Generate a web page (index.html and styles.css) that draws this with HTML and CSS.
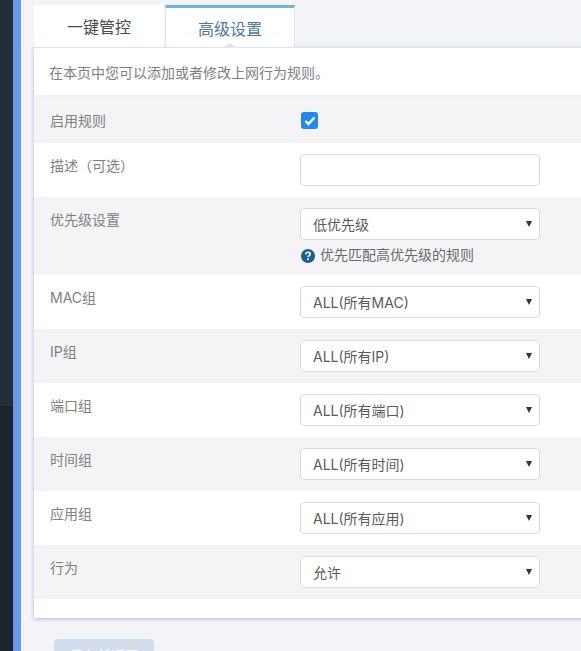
FILE: index.html
```html
<!DOCTYPE html>
<html>
<head>
  <link rel="stylesheet" href="styles.css">
</head>
<body>
  <div class="sidebar">
    <div class="sidebar-top"></div>
    <div class="sidebar-bottom"></div>
  </div>
  <div class="sidebar-edge"></div>

  <div class="content">
    <div class="tabs">
      <div class="tab">一键管控</div>
      <div class="tab active">高级设置</div>
    </div>

    <div class="panel">
      <p class="intro">在本页中您可以添加或者修改上网行为规则。</p>

      <div class="row row-check">
        <label>启用规则</label>
        <div class="field">
          <span class="checkbox">
            <svg width="12" height="10" viewBox="0 0 12 10" fill="none" stroke="#fff" stroke-width="2.4">
              <path d="M1.5 5L4.5 8L10.5 1.5"/>
            </svg>
          </span>
        </div>
      </div>

      <div class="row">
        <label>描述（可选）</label>
        <div class="field"><div class="input"></div></div>
      </div>

      <div class="row">
        <label>优先级设置</label>
        <div class="field">
          <div class="input select">低优先级</div>
          <div class="hint">
            <svg width="14" height="14" viewBox="0 0 14 14">
              <circle cx="7" cy="7" r="7" fill="#1b5f93"/>
              <path d="M4.8 5.4C4.8 4.1 5.8 3.3 7 3.3C8.3 3.3 9.2 4.1 9.2 5.2C9.2 6.6 7.3 6.7 7.1 8.2" fill="none" stroke="#fff" stroke-width="1.6"/>
              <circle cx="7" cy="10.3" r="1" fill="#fff"/>
            </svg>
            <span>优先匹配高优先级的规则</span>
          </div>
        </div>
      </div>

      <div class="row">
        <label>MAC组</label>
        <div class="field"><div class="input select">ALL(所有MAC)</div></div>
      </div>

      <div class="row">
        <label>IP组</label>
        <div class="field"><div class="input select">ALL(所有IP)</div></div>
      </div>

      <div class="row">
        <label>端口组</label>
        <div class="field"><div class="input select">ALL(所有端口)</div></div>
      </div>

      <div class="row">
        <label>时间组</label>
        <div class="field"><div class="input select">ALL(所有时间)</div></div>
      </div>

      <div class="row">
        <label>应用组</label>
        <div class="field"><div class="input select">ALL(所有应用)</div></div>
      </div>

      <div class="row">
        <label>行为</label>
        <div class="field"><div class="input select">允许</div></div>
      </div>
    </div>

    <div class="actions">
      <button class="save-button">保存并返回</button>
    </div>
  </div>
</body>
</html>
```

FILE: styles.css
```css
* {
  margin: 0;
  padding: 0;
  box-sizing: border-box;
  font-family: Inter, "Noto Sans CJK SC", sans-serif;
}

html,
body {
  height: 651px;
  overflow: hidden;
}

body {
  display: flex;
  width: 581px;
  background: #f3f4f8;
}

.sidebar {
  display: flex;
  flex-direction: column;
  flex: 0 0 13px;
}

.sidebar-top {
  height: 406px;
  background: #242d3a;
}

.sidebar-bottom {
  flex: 1;
  background: #1b232c;
}

.sidebar-edge {
  flex: 0 0 8px;
  background: #6a98ea;
}

.content {
  flex: 1;
  min-width: 0;
  padding: 5px 0 0 13px;
}

/* Tabs */
.tabs {
  display: flex;
  gap: 1px;
  height: 42px;
}

.tab {
  width: 130px;
  padding-top: 10px;
  background: #fff;
  color: #4a4a4a;
  font-size: 16px;
  line-height: 24px;
  text-align: center;
}

.tab.active {
  position: relative;
  padding-top: 9px;
  border-top: 3px solid #74b1dc;
  border-left: 1px solid #dde5f0;
  border-right: 1px solid #dde5f0;
  color: #4d77a5;
}

.tab.active::after {
  content: "";
  position: absolute;
  bottom: 0;
  left: 58px;
  border-bottom: 4px solid #dde5f0;
  border-left: 6px solid transparent;
  border-right: 6px solid transparent;
}

/* Panel */
.panel {
  width: 560px;
  height: 571px;
  background: #fff;
  border-top: 1px solid #dce5f3;
  box-shadow: 0 1px 4px rgba(120, 150, 205, 0.6);
}

.intro {
  height: 49px;
  padding: 15px 0 0 15px;
  border-bottom: 2px solid #eef3fa;
  color: #808080;
  font-size: 14px;
  line-height: 20px;
}

.row {
  display: flex;
  padding: 11px 0 11px 16px;
}

.row:nth-of-type(odd) {
  background: #f4f4f7;
}

.row label {
  flex: 0 0 250px;
  color: #808080;
  font-size: 14px;
  line-height: 24px;
}

.row-check {
  height: 46px;
  padding-top: 12px;
}

.field {
  width: 240px;
}

.input {
  height: 32px;
  padding-left: 12px;
  background: #fff;
  border: 1px solid #d9dbe0;
  border-radius: 4px;
  color: #5a5a5a;
  font-size: 14px;
  line-height: 31px;
}

.select {
  position: relative;
}

.select::after {
  content: "";
  position: absolute;
  top: 12px;
  right: 7px;
  border-top: 6px solid #333;
  border-left: 3px solid transparent;
  border-right: 3px solid transparent;
}

.checkbox {
  display: flex;
  align-items: center;
  justify-content: center;
  width: 17px;
  height: 17px;
  margin: 3px 0 0 1px;
  background: #2488ea;
  border-radius: 3px;
}

.hint {
  display: flex;
  align-items: center;
  gap: 5px;
  height: 16px;
  margin-top: 8px;
  padding-left: 1px;
  color: #6a6a6a;
  font-size: 14px;
}

.hint span {
  margin-bottom: 3px;
  line-height: 16px;
}

/* Bottom actions */
.actions {
  padding: 21px 0 0 20px;
}

.save-button {
  width: 100px;
  height: 32px;
  background: #d3deec;
  border: none;
  border-radius: 4px;
  color: #fff;
  font-size: 14px;
}
```
